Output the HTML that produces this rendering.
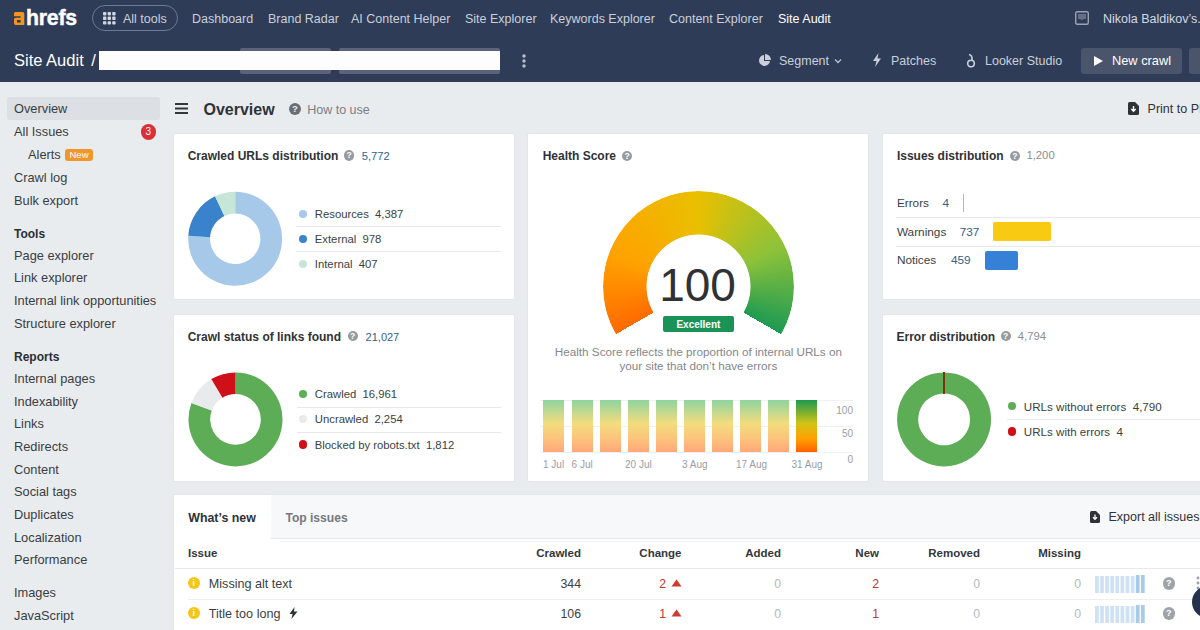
<!DOCTYPE html>
<html><head><meta charset="utf-8">
<style>
*{box-sizing:border-box;margin:0;padding:0}
html,body{width:1200px;height:630px;overflow:hidden}
body{position:relative;background:#e9ecef;font-family:"Liberation Sans",sans-serif}
.a{position:absolute;white-space:nowrap}
</style></head><body>
<div class="a" style="left:0px;top:0px;width:1200px;height:82px;background:#2f3c57;"></div>
<svg class="a" style="left:14px;top:12px;" width="11" height="13" viewBox="0 0 11 13"><path d="M1.5 0H8.5Q10.3 0 10.3 1.8V13H1.8Q0 13 0 11.2V7.5Q0 5.8 1.8 5.8H6.6V4.2H0V1.5Q0 0 1.5 0z" fill="#f39422"/><rect x="3" y="8" width="3.6" height="2.6" fill="#2f3c57"/></svg>
<div class="a" style="left:26.0px;top:7.7px;font-size:21.3px;line-height:21.3px;font-weight:700;color:#fff;letter-spacing:-0.25px;-webkit-text-stroke:0.45px #fff">hrefs</div>
<div class="a" style="left:92px;top:5px;width:86px;height:26px;border:1px solid #6d7891;border-radius:13px"></div>
<svg class="a" style="left:103px;top:12px;" width="13" height="13" viewBox="0 0 13 13"><rect x="0" y="0" width="3.4" height="3.4" rx="0.8" fill="#d0d6e1"/><rect x="0" y="4.6" width="3.4" height="3.4" rx="0.8" fill="#d0d6e1"/><rect x="0" y="9.2" width="3.4" height="3.4" rx="0.8" fill="#d0d6e1"/><rect x="4.6" y="0" width="3.4" height="3.4" rx="0.8" fill="#d0d6e1"/><rect x="4.6" y="4.6" width="3.4" height="3.4" rx="0.8" fill="#d0d6e1"/><rect x="4.6" y="9.2" width="3.4" height="3.4" rx="0.8" fill="#d0d6e1"/><rect x="9.2" y="0" width="3.4" height="3.4" rx="0.8" fill="#d0d6e1"/><rect x="9.2" y="4.6" width="3.4" height="3.4" rx="0.8" fill="#d0d6e1"/><rect x="9.2" y="9.2" width="3.4" height="3.4" rx="0.8" fill="#d0d6e1"/></svg>
<div class="a" style="left:123.0px;top:12.8px;font-size:12.5px;line-height:12.5px;font-weight:400;color:#c9d0dc;">All tools</div>
<div class="a" style="left:192.0px;top:12.8px;font-size:12.5px;line-height:12.5px;font-weight:400;color:#c9d0dc;">Dashboard</div>
<div class="a" style="left:268.0px;top:12.8px;font-size:12.5px;line-height:12.5px;font-weight:400;color:#c9d0dc;">Brand Radar</div>
<div class="a" style="left:351.0px;top:12.8px;font-size:12.5px;line-height:12.5px;font-weight:400;color:#c9d0dc;">AI Content Helper</div>
<div class="a" style="left:465.0px;top:12.8px;font-size:12.5px;line-height:12.5px;font-weight:400;color:#c9d0dc;">Site Explorer</div>
<div class="a" style="left:550.0px;top:12.8px;font-size:12.5px;line-height:12.5px;font-weight:400;color:#c9d0dc;">Keywords Explorer</div>
<div class="a" style="left:669.0px;top:12.8px;font-size:12.5px;line-height:12.5px;font-weight:400;color:#c9d0dc;">Content Explorer</div>
<div class="a" style="left:778.0px;top:12.8px;font-size:12.5px;line-height:12.5px;font-weight:400;color:#fff;">Site Audit</div>
<svg class="a" style="left:1075px;top:11px;" width="14" height="14" viewBox="0 0 14 14"><rect x="0.7" y="0.7" width="12.6" height="12.6" rx="1.5" fill="none" stroke="#9aa3b5" stroke-width="1.4"/><path d="M3 3h8v5H8.5L7 9.5 5.5 8H3z" fill="#9aa3b5" opacity=".5"/></svg>
<div class="a" style="left:1103.0px;top:12.8px;font-size:12.5px;line-height:12.5px;font-weight:400;color:#d3d9e3;">Nikola Baldikov’s...</div>
<div class="a" style="left:14.0px;top:52.1px;font-size:16.5px;line-height:16.5px;font-weight:400;color:#fff;">Site Audit</div>
<div class="a" style="left:91.3px;top:52.1px;font-size:16.5px;line-height:16.5px;font-weight:400;color:#fff;">/</div>
<div class="a" style="left:240px;top:47.8px;width:91px;height:25.8px;background:#5a6379;border-radius:2px"></div>
<div class="a" style="left:339px;top:47.8px;width:161px;height:25.8px;background:#5a6379;border-radius:2px"></div>
<div class="a" style="left:99px;top:51.2px;width:401px;height:19.2px;background:#fdfdfd;"></div>
<svg class="a" style="left:521px;top:54px;" width="6" height="14" viewBox="0 0 6 14"><circle cx="3" cy="2" r="1.7" fill="#b8c0cf"/><circle cx="3" cy="7" r="1.7" fill="#b8c0cf"/><circle cx="3" cy="12" r="1.7" fill="#b8c0cf"/></svg>
<svg class="a" style="left:758px;top:54px;" width="13" height="13" viewBox="0 0 13 13"><path d="M6 1A5.5 5.5 0 1 0 12 7H6z" fill="#c9d0dc"/><path d="M7 0v6h6A6 6 0 0 0 7 0z" fill="#c9d0dc"/></svg>
<div class="a" style="left:779.0px;top:55.2px;font-size:12.5px;line-height:12.5px;font-weight:400;color:#c9d0dc;">Segment</div>
<svg class="a" style="left:834px;top:58px;" width="8" height="6" viewBox="0 0 8 6"><path d="M1 1.5l3 3 3-3" fill="none" stroke="#b9c1cf" stroke-width="1.3"/></svg>
<svg class="a" style="left:872px;top:53px;" width="10" height="14" viewBox="0 0 10 14"><path d="M6.5 0L1 8h3.5L3 14l6-8.5H5.5z" fill="#c9d0dc"/></svg>
<div class="a" style="left:891.0px;top:55.2px;font-size:12.5px;line-height:12.5px;font-weight:400;color:#c9d0dc;">Patches</div>
<svg class="a" style="left:966px;top:53px;" width="10" height="15" viewBox="0 0 10 15"><circle cx="5" cy="10.5" r="3.3" fill="none" stroke="#c9d0dc" stroke-width="1.6"/><path d="M3 1.5Q6.5 2 6 7.2" fill="none" stroke="#c9d0dc" stroke-width="1.6"/></svg>
<div class="a" style="left:985.0px;top:55.2px;font-size:12.5px;line-height:12.5px;font-weight:400;color:#c9d0dc;">Looker Studio</div>
<div class="a" style="left:1081px;top:48px;width:101px;height:26px;background:#4a556c;border-radius:3px"></div>
<svg class="a" style="left:1093.5px;top:56px;" width="9" height="10" viewBox="0 0 9 10"><path d="M0 0l9 5-9 5z" fill="#fff"/></svg>
<div class="a" style="left:1112.0px;top:55.0px;font-size:12.8px;line-height:12.8px;font-weight:400;color:#fff;">New crawl</div>
<div class="a" style="left:1189px;top:48px;width:20px;height:26px;background:#4a556c;border-radius:3px"></div>
<div class="a" style="left:7px;top:97px;width:153px;height:23px;background:#dcdfe3;border-radius:3px"></div>
<div class="a" style="left:14.0px;top:102.8px;font-size:12.8px;line-height:12.8px;font-weight:400;color:#393d43;">Overview</div>
<div class="a" style="left:14.0px;top:125.9px;font-size:12.8px;line-height:12.8px;font-weight:400;color:#393d43;">All Issues</div>
<div class="a" style="left:28.0px;top:149.2px;font-size:12.8px;line-height:12.8px;font-weight:400;color:#393d43;">Alerts</div>
<div class="a" style="left:14.0px;top:172.3px;font-size:12.8px;line-height:12.8px;font-weight:400;color:#393d43;">Crawl log</div>
<div class="a" style="left:14.0px;top:194.5px;font-size:12.8px;line-height:12.8px;font-weight:400;color:#393d43;">Bulk export</div>
<div class="a" style="left:14.0px;top:227.6px;font-size:12px;line-height:12px;font-weight:700;color:#2b2f35;">Tools</div>
<div class="a" style="left:14.0px;top:250.0px;font-size:12.8px;line-height:12.8px;font-weight:400;color:#393d43;">Page explorer</div>
<div class="a" style="left:14.0px;top:272.3px;font-size:12.8px;line-height:12.8px;font-weight:400;color:#393d43;">Link explorer</div>
<div class="a" style="left:14.0px;top:295.0px;font-size:12.8px;line-height:12.8px;font-weight:400;color:#393d43;">Internal link opportunities</div>
<div class="a" style="left:14.0px;top:317.6px;font-size:12.8px;line-height:12.8px;font-weight:400;color:#393d43;">Structure explorer</div>
<div class="a" style="left:14.0px;top:351.2px;font-size:12px;line-height:12px;font-weight:700;color:#2b2f35;">Reports</div>
<div class="a" style="left:14.0px;top:373.4px;font-size:12.8px;line-height:12.8px;font-weight:400;color:#393d43;">Internal pages</div>
<div class="a" style="left:14.0px;top:396.0px;font-size:12.8px;line-height:12.8px;font-weight:400;color:#393d43;">Indexability</div>
<div class="a" style="left:14.0px;top:418.4px;font-size:12.8px;line-height:12.8px;font-weight:400;color:#393d43;">Links</div>
<div class="a" style="left:14.0px;top:440.8px;font-size:12.8px;line-height:12.8px;font-weight:400;color:#393d43;">Redirects</div>
<div class="a" style="left:14.0px;top:463.5px;font-size:12.8px;line-height:12.8px;font-weight:400;color:#393d43;">Content</div>
<div class="a" style="left:14.0px;top:485.8px;font-size:12.8px;line-height:12.8px;font-weight:400;color:#393d43;">Social tags</div>
<div class="a" style="left:14.0px;top:509.0px;font-size:12.8px;line-height:12.8px;font-weight:400;color:#393d43;">Duplicates</div>
<div class="a" style="left:14.0px;top:531.9px;font-size:12.8px;line-height:12.8px;font-weight:400;color:#393d43;">Localization</div>
<div class="a" style="left:14.0px;top:554.0px;font-size:12.8px;line-height:12.8px;font-weight:400;color:#393d43;">Performance</div>
<div class="a" style="left:14.0px;top:587.0px;font-size:12.8px;line-height:12.8px;font-weight:400;color:#393d43;">Images</div>
<div class="a" style="left:14.0px;top:609.6px;font-size:12.8px;line-height:12.8px;font-weight:400;color:#393d43;">JavaScript</div>
<div class="a" style="left:140.5px;top:124px;width:15.5px;height:15.5px;border-radius:50%;background:#d9303a;color:#fff;font-size:10px;line-height:15.5px;text-align:center">3</div>
<div class="a" style="left:65px;top:148.5px;width:28px;height:12px;border-radius:3px;background:#f0962a;color:#fff;font-size:9.5px;line-height:12px;text-align:center">New</div>
<svg class="a" style="left:175px;top:103px;" width="13" height="11" viewBox="0 0 13 11"><rect x="0" y="0" width="13" height="2" fill="#33373d"/><rect x="0" y="4.5" width="13" height="2" fill="#33373d"/><rect x="0" y="9" width="13" height="2" fill="#33373d"/></svg>
<div class="a" style="left:203.5px;top:102.1px;font-size:16px;line-height:16px;font-weight:700;color:#2f3338;">Overview</div>
<div class="a" style="left:289px;top:103px;width:12px;height:12px;border-radius:50%;background:#6b6f75;color:#e9ecef;font-size:9.5px;line-height:12px;text-align:center;font-weight:bold">?</div>
<div class="a" style="left:307.2px;top:103.7px;font-size:12.5px;line-height:12.5px;font-weight:400;color:#7a7e85;">How to use</div>
<svg class="a" style="left:1128px;top:102px;" width="11" height="13" viewBox="0 0 11 13"><path d="M0 1.5Q0 0 1.5 0H7l4 4v7.5Q11 13 9.5 13h-8Q0 13 0 11.5z" fill="#2f3338"/><path d="M5.5 4v5M3.3 7l2.2 2.2L7.7 7" stroke="#fff" stroke-width="1.4" fill="none"/></svg>
<div class="a" style="left:1147.6px;top:102.6px;font-size:12.5px;line-height:12.5px;font-weight:400;color:#2f3338;">Print to PDF</div>
<div class="a" style="left:173px;top:133px;width:341.5px;height:167px;background:#fff;border:1px solid #e3e6e9;border-radius:2px"></div>
<div class="a" style="left:173px;top:314px;width:341.5px;height:167.5px;background:#fff;border:1px solid #e3e6e9;border-radius:2px"></div>
<div class="a" style="left:527.3px;top:133px;width:341.5px;height:348.5px;background:#fff;border:1px solid #e3e6e9;border-radius:2px"></div>
<div class="a" style="left:881.8px;top:133px;width:330px;height:166.5px;background:#fff;border:1px solid #e3e6e9;border-radius:2px"></div>
<div class="a" style="left:881.8px;top:314px;width:330px;height:167.5px;background:#fff;border:1px solid #e3e6e9;border-radius:2px"></div>
<div class="a" style="left:173px;top:494px;width:1040px;height:150px;background:#fff;border:1px solid #e3e6e9;border-radius:2px"></div>
<div class="a" style="left:187.7px;top:149.9px;font-size:12px;line-height:12px;font-weight:700;color:#2f3237;">Crawled URLs distribution</div>
<div class="a" style="left:343.9px;top:150.4px;width:10.2px;height:10.2px;border-radius:50%;background:#979a9e;color:#fff;font-size:8.5px;line-height:10.2px;text-align:center;font-weight:bold">?</div>
<div class="a" style="left:361.7px;top:150.6px;font-size:11.2px;line-height:11.2px;font-weight:400;color:#36608c;">5,772</div>
<svg class="a" style="left:180px;top:183px;" width="112" height="112" viewBox="0 0 112 112"><path d="M55.20 8.80A47 47 0 1 1 8.29 52.83L30.05 54.21A25.2 25.2 0 1 0 55.20 30.60Z" fill="#a6c9ea"/><path d="M8.29 52.83A47 47 0 0 1 35.05 13.34L44.40 33.03A25.2 25.2 0 0 0 30.05 54.21Z" fill="#3a82cc"/><path d="M35.05 13.34A47 47 0 0 1 55.20 8.80L55.20 30.60A25.2 25.2 0 0 0 44.40 33.03Z" fill="#c6e6d8"/></svg>
<div class="a" style="left:298.7px;top:209.5px;width:8.6px;height:8.6px;border-radius:50%;background:#a6c9ea"></div>
<div class="a" style="left:314.8px;top:209.0px;font-size:11.3px;line-height:11.3px;font-weight:400;color:#3a3f45;">Resources&nbsp; 4,387</div>
<div class="a" style="left:298.7px;top:234.6px;width:8.6px;height:8.6px;border-radius:50%;background:#3a82cc"></div>
<div class="a" style="left:314.8px;top:234.1px;font-size:11.3px;line-height:11.3px;font-weight:400;color:#3a3f45;">External&nbsp; 978</div>
<div class="a" style="left:298.7px;top:259.7px;width:8.6px;height:8.6px;border-radius:50%;background:#c6e6d8"></div>
<div class="a" style="left:314.8px;top:259.2px;font-size:11.3px;line-height:11.3px;font-weight:400;color:#3a3f45;">Internal&nbsp; 407</div>
<div class="a" style="left:296px;top:226.3px;width:205px;height:1px;background:#e6e8ea;"></div>
<div class="a" style="left:296px;top:251.4px;width:205px;height:1px;background:#e6e8ea;"></div>
<div class="a" style="left:187.7px;top:330.8px;font-size:12px;line-height:12px;font-weight:700;color:#2f3237;">Crawl status of links found</div>
<div class="a" style="left:347.5px;top:331.3px;width:10.2px;height:10.2px;border-radius:50%;background:#979a9e;color:#fff;font-size:8.5px;line-height:10.2px;text-align:center;font-weight:bold">?</div>
<div class="a" style="left:365.6px;top:331.7px;font-size:11px;line-height:11px;font-weight:400;color:#36608c;">21,027</div>
<svg class="a" style="left:180px;top:364px;" width="112" height="112" viewBox="0 0 112 112"><path d="M55.50 8.40A47 47 0 1 1 11.44 39.03L31.78 46.59A25.3 25.3 0 1 0 55.50 30.10Z" fill="#5cad55"/><path d="M11.44 39.03A47 47 0 0 1 31.28 15.12L42.46 33.72A25.3 25.3 0 0 0 31.78 46.59Z" fill="#e9eaeb"/><path d="M31.28 15.12A47 47 0 0 1 55.50 8.40L55.50 30.10A25.3 25.3 0 0 0 42.46 33.72Z" fill="#cf1018"/></svg>
<div class="a" style="left:298.9px;top:389.9px;width:8.6px;height:8.6px;border-radius:50%;background:#5cad55"></div>
<div class="a" style="left:314.8px;top:389.4px;font-size:11.3px;line-height:11.3px;font-weight:400;color:#3a3f45;">Crawled&nbsp; 16,961</div>
<div class="a" style="left:298.9px;top:414.7px;width:8.6px;height:8.6px;border-radius:50%;background:#e9eaeb"></div>
<div class="a" style="left:314.8px;top:414.2px;font-size:11.3px;line-height:11.3px;font-weight:400;color:#3a3f45;">Uncrawled&nbsp; 2,254</div>
<div class="a" style="left:298.9px;top:440.1px;width:8.6px;height:8.6px;border-radius:50%;background:#cf1018"></div>
<div class="a" style="left:314.8px;top:439.6px;font-size:11.3px;line-height:11.3px;font-weight:400;color:#3a3f45;">Blocked by robots.txt&nbsp; 1,812</div>
<div class="a" style="left:297px;top:407px;width:204px;height:1px;background:#e6e8ea;"></div>
<div class="a" style="left:297px;top:432px;width:204px;height:1px;background:#e6e8ea;"></div>
<div class="a" style="left:542.7px;top:149.8px;font-size:12px;line-height:12px;font-weight:700;color:#2f3237;">Health Score</div>
<div class="a" style="left:622px;top:150.6px;width:10.2px;height:10.2px;border-radius:50%;background:#979a9e;color:#fff;font-size:8.5px;line-height:10.2px;text-align:center;font-weight:bold">?</div>
<div class="a" id="gauge" style="left:602.8px;top:190.6px;width:191.2px;height:191.2px;border-radius:50%;background:conic-gradient(from -120deg, #ff6a00 0deg, #ffa200 50deg, #e9c000 120deg, #8cc23a 185deg, #1e9a52 240deg, transparent 240deg);-webkit-mask:radial-gradient(circle, transparent 51.6px, #000 52.4px);mask:radial-gradient(circle, transparent 51.6px, #000 52.4px)"></div>
<div class="a" style="left:397.5px;width:600px;text-align:center;top:261.5px;font-size:46px;line-height:46px;font-weight:400;color:#2f3135;">100</div>
<div class="a" style="left:663.2px;top:316.3px;width:70.5px;height:15.4px;background:#1b9357;border-radius:2px"></div>
<div class="a" style="left:398.4px;width:600px;text-align:center;top:319.9px;font-size:10px;line-height:10px;font-weight:700;color:#fff;">Excellent</div>
<div class="a" style="left:398.4px;width:600px;text-align:center;top:346.3px;font-size:11.7px;line-height:11.7px;font-weight:400;color:#84878c;">Health Score reflects the proportion of internal URLs on</div>
<div class="a" style="left:398.4px;width:600px;text-align:center;top:359.9px;font-size:11.7px;line-height:11.7px;font-weight:400;color:#84878c;">your site that don’t have errors</div>
<div class="a" style="left:540px;top:399.5px;width:313px;height:1px;background:#eef0f1;"></div>
<div class="a" style="left:540px;top:425.5px;width:313px;height:1px;background:#eef0f1;"></div>
<div class="a" style="left:540px;top:452px;width:313px;height:1px;background:#eef0f1;"></div>
<div class="a" style="left:543.4px;top:399.5px;width:21px;height:52.5px;background:linear-gradient(#8ed39f 0%, #f3dc7e 45%, #fcc37c 75%, #ffa77a 100%);"></div>
<div class="a" style="left:571.5px;top:399.5px;width:21px;height:52.5px;background:linear-gradient(#8ed39f 0%, #f3dc7e 45%, #fcc37c 75%, #ffa77a 100%);"></div>
<div class="a" style="left:599.6px;top:399.5px;width:21px;height:52.5px;background:linear-gradient(#8ed39f 0%, #f3dc7e 45%, #fcc37c 75%, #ffa77a 100%);"></div>
<div class="a" style="left:627.6px;top:399.5px;width:21px;height:52.5px;background:linear-gradient(#8ed39f 0%, #f3dc7e 45%, #fcc37c 75%, #ffa77a 100%);"></div>
<div class="a" style="left:655.7px;top:399.5px;width:21px;height:52.5px;background:linear-gradient(#8ed39f 0%, #f3dc7e 45%, #fcc37c 75%, #ffa77a 100%);"></div>
<div class="a" style="left:683.8px;top:399.5px;width:21px;height:52.5px;background:linear-gradient(#8ed39f 0%, #f3dc7e 45%, #fcc37c 75%, #ffa77a 100%);"></div>
<div class="a" style="left:711.9px;top:399.5px;width:21px;height:52.5px;background:linear-gradient(#8ed39f 0%, #f3dc7e 45%, #fcc37c 75%, #ffa77a 100%);"></div>
<div class="a" style="left:740.0px;top:399.5px;width:21px;height:52.5px;background:linear-gradient(#8ed39f 0%, #f3dc7e 45%, #fcc37c 75%, #ffa77a 100%);"></div>
<div class="a" style="left:768.0px;top:399.5px;width:21px;height:52.5px;background:linear-gradient(#8ed39f 0%, #f3dc7e 45%, #fcc37c 75%, #ffa77a 100%);"></div>
<div class="a" style="left:796.1px;top:399.5px;width:21px;height:52.5px;background:linear-gradient(#1c9a50 0%, #d3c317 45%, #ffa000 75%, #ff6000 100%);"></div>
<div class="a" style="right:347.0px;top:405.8px;font-size:10px;line-height:10px;font-weight:400;color:#9a9ea4;">100</div>
<div class="a" style="right:347.0px;top:429.3px;font-size:10px;line-height:10px;font-weight:400;color:#9a9ea4;">50</div>
<div class="a" style="right:347.0px;top:455.3px;font-size:10px;line-height:10px;font-weight:400;color:#9a9ea4;">0</div>
<div class="a" style="left:543.0px;top:459.8px;font-size:10px;line-height:10px;font-weight:400;color:#9a9ea4;">1 Jul</div>
<div class="a" style="left:571.6px;top:459.8px;font-size:10px;line-height:10px;font-weight:400;color:#9a9ea4;">6 Jul</div>
<div class="a" style="left:625.0px;top:459.8px;font-size:10px;line-height:10px;font-weight:400;color:#9a9ea4;">20 Jul</div>
<div class="a" style="left:682.0px;top:459.8px;font-size:10px;line-height:10px;font-weight:400;color:#9a9ea4;">3 Aug</div>
<div class="a" style="left:736.0px;top:459.8px;font-size:10px;line-height:10px;font-weight:400;color:#9a9ea4;">17 Aug</div>
<div class="a" style="left:791.5px;top:459.8px;font-size:10px;line-height:10px;font-weight:400;color:#9a9ea4;">31 Aug</div>
<div class="a" style="left:896.9px;top:149.8px;font-size:12px;line-height:12px;font-weight:700;color:#2f3237;">Issues distribution</div>
<div class="a" style="left:1009.7px;top:150.6px;width:10.2px;height:10.2px;border-radius:50%;background:#979a9e;color:#fff;font-size:8.5px;line-height:10.2px;text-align:center;font-weight:bold">?</div>
<div class="a" style="left:1026.4px;top:150.4px;font-size:11.3px;line-height:11.3px;font-weight:400;color:#8a8e94;">1,200</div>
<div class="a" style="left:896.9px;top:198.0px;font-size:11.8px;line-height:11.8px;font-weight:400;color:#3a3f45;">Errors</div>
<div class="a" style="left:942.6px;top:198.0px;font-size:11.8px;line-height:11.8px;font-weight:400;color:#36608c;">4</div>
<div class="a" style="left:962.5px;top:194px;width:1.3px;height:18.4px;background:#b4b7bb;"></div>
<div class="a" style="left:896px;top:217.4px;width:320px;height:1px;background:#e6e8ea;"></div>
<div class="a" style="left:896.9px;top:226.6px;font-size:11.8px;line-height:11.8px;font-weight:400;color:#3a3f45;">Warnings</div>
<div class="a" style="left:959.7px;top:226.6px;font-size:11.8px;line-height:11.8px;font-weight:400;color:#36608c;">737</div>
<div class="a" style="left:993px;top:222.2px;width:57.5px;height:19.2px;background:#f8cb12;border-radius:2px"></div>
<div class="a" style="left:896px;top:246.1px;width:320px;height:1px;background:#e6e8ea;"></div>
<div class="a" style="left:896.9px;top:255.1px;font-size:11.8px;line-height:11.8px;font-weight:400;color:#3a3f45;">Notices</div>
<div class="a" style="left:951.0px;top:255.1px;font-size:11.8px;line-height:11.8px;font-weight:400;color:#36608c;">459</div>
<div class="a" style="left:985.2px;top:251.2px;width:32.5px;height:18.8px;background:#3581d8;border-radius:2px"></div>
<div class="a" style="left:896.5px;top:330.8px;font-size:12px;line-height:12px;font-weight:700;color:#2f3237;">Error distribution</div>
<div class="a" style="left:1000.5px;top:331.3px;width:10.2px;height:10.2px;border-radius:50%;background:#979a9e;color:#fff;font-size:8.5px;line-height:10.2px;text-align:center;font-weight:bold">?</div>
<div class="a" style="left:1017.8px;top:331.4px;font-size:11.3px;line-height:11.3px;font-weight:400;color:#8a8e94;">4,794</div>
<svg class="a" style="left:888px;top:364px;" width="112" height="112" viewBox="0 0 112 112"><path d="M56.20 8.40A47 47 0 1 1 55.95 8.40L56.06 29.50A25.9 25.9 0 1 0 56.20 29.50Z" fill="#5cad55"/><path d="M55.95 8.40A47 47 0 0 1 56.20 8.40L56.20 29.50A25.9 25.9 0 0 0 56.06 29.50Z" fill="#8b1a10"/></svg>
<div class="a" style="left:943.4px;top:372.4px;width:1.6px;height:21.5px;background:#7a3412;"></div>
<div class="a" style="left:1007.5px;top:401.9px;width:8.6px;height:8.6px;border-radius:50%;background:#5cad55"></div>
<div class="a" style="left:1023.8px;top:401.2px;font-size:11.6px;line-height:11.6px;font-weight:400;color:#3a3f45;">URLs without errors&nbsp; 4,790</div>
<div class="a" style="left:1007.5px;top:427.0px;width:8.6px;height:8.6px;border-radius:50%;background:#cf1018"></div>
<div class="a" style="left:1023.8px;top:426.3px;font-size:11.6px;line-height:11.6px;font-weight:400;color:#3a3f45;">URLs with errors&nbsp; 4</div>
<div class="a" style="left:1007.3px;top:419.2px;width:200px;height:1px;background:#e6e8ea;"></div>
<div class="a" style="left:174.5px;top:495.2px;width:1030px;height:43px;background:#f7f8f9;"></div>
<div class="a" style="left:174.5px;top:495.2px;width:96px;height:44px;background:#fff;"></div>
<div class="a" style="left:270px;top:538px;width:940px;height:1px;background:#e6e8ea;"></div>
<div class="a" style="left:280px;top:541px;width:930px;height:1px;background:#f1f2f4;"></div>
<div class="a" style="left:188.2px;top:512.0px;font-size:12.4px;line-height:12.4px;font-weight:700;color:#2f3237;">What’s new</div>
<div class="a" style="left:285.4px;top:512.3px;font-size:12.1px;line-height:12.1px;font-weight:700;color:#75797e;">Top issues</div>
<svg class="a" style="left:1090px;top:511px;" width="10" height="12" viewBox="0 0 10 12"><path d="M0 1.5Q0 0 1.5 0H6l4 4v6.5Q10 12 8.5 12h-7Q0 12 0 10.5z" fill="#2f3338"/><path d="M5 3.5v4.5M3 6.3l2 2 2-2" stroke="#fff" stroke-width="1.3" fill="none"/></svg>
<div class="a" style="left:1108.5px;top:511.2px;font-size:12.5px;line-height:12.5px;font-weight:400;color:#2f3338;">Export all issues</div>
<div class="a" style="left:188.0px;top:547.6px;font-size:11.5px;line-height:11.5px;font-weight:700;color:#33373c;">Issue</div>
<div class="a" style="right:619.0px;top:547.6px;font-size:11.5px;line-height:11.5px;font-weight:700;color:#33373c;">Crawled</div>
<div class="a" style="right:518.5px;top:547.6px;font-size:11.5px;line-height:11.5px;font-weight:700;color:#33373c;">Change</div>
<div class="a" style="right:419.0px;top:547.6px;font-size:11.5px;line-height:11.5px;font-weight:700;color:#33373c;">Added</div>
<div class="a" style="right:321.0px;top:547.6px;font-size:11.5px;line-height:11.5px;font-weight:700;color:#33373c;">New</div>
<div class="a" style="right:220.0px;top:547.6px;font-size:11.5px;line-height:11.5px;font-weight:700;color:#33373c;">Removed</div>
<div class="a" style="right:119.0px;top:547.6px;font-size:11.5px;line-height:11.5px;font-weight:700;color:#33373c;">Missing</div>
<div class="a" style="left:174.5px;top:568.3px;width:1030px;height:1px;background:#e6e8ea;"></div>
<div class="a" style="left:188px;top:598.8px;width:1020px;height:1px;background:#eceef0;"></div>
<div class="a" style="left:187.7px;top:577.3px;width:12px;height:12px;border-radius:50%;background:#f5c518;color:#fff;font-size:9px;line-height:12px;text-align:center;font-weight:bold">i</div>
<div class="a" style="left:208.8px;top:577.8px;font-size:12.6px;line-height:12.6px;font-weight:400;color:#3a3f45;">Missing alt text</div>
<div class="a" style="right:619.0px;top:578.1px;font-size:12.3px;line-height:12.3px;font-weight:400;color:#3a3f45;">344</div>
<div class="a" style="right:534.0px;top:578.1px;font-size:12.3px;line-height:12.3px;font-weight:400;color:#c0392b;">2</div>
<svg class="a" style="left:670.5px;top:578.7px;" width="11" height="8" viewBox="0 0 11 8"><path d="M5.5 0.5L10.5 7.5H0.5z" fill="#d23a30"/></svg>
<div class="a" style="right:419.0px;top:578.1px;font-size:12.3px;line-height:12.3px;font-weight:400;color:#b5b8bc;">0</div>
<div class="a" style="right:321.0px;top:578.1px;font-size:12.3px;line-height:12.3px;font-weight:400;color:#c0392b;">2</div>
<div class="a" style="right:220.0px;top:578.1px;font-size:12.3px;line-height:12.3px;font-weight:400;color:#b5b8bc;">0</div>
<div class="a" style="right:119.0px;top:578.1px;font-size:12.3px;line-height:12.3px;font-weight:400;color:#b5b8bc;">0</div>
<svg class="a" style="left:1095px;top:575px;" width="51" height="18" viewBox="0 0 51 18"><rect x="0.0" y="1" width="3.8" height="17" fill="#cfe2f3"/><rect x="5.1" y="1" width="3.8" height="17" fill="#cfe2f3"/><rect x="10.2" y="1" width="3.8" height="17" fill="#cfe2f3"/><rect x="15.3" y="1" width="3.8" height="17" fill="#cfe2f3"/><rect x="20.4" y="1" width="3.8" height="17" fill="#cfe2f3"/><rect x="25.5" y="1" width="3.8" height="17" fill="#cfe2f3"/><rect x="30.6" y="1" width="3.8" height="17" fill="#cfe2f3"/><rect x="35.7" y="1" width="3.8" height="17" fill="#cfe2f3"/><rect x="40.8" y="0" width="3.8" height="18" fill="#a9cbe9"/><rect x="45.9" y="0" width="3.8" height="18" fill="#a9cbe9"/></svg>
<div class="a" style="left:1162.5px;top:577.3px;width:12.4px;height:12.4px;border-radius:50%;background:#a0a3a8;color:#fff;font-size:9px;line-height:12px;text-align:center;font-weight:bold">?</div>
<div class="a" style="left:187.7px;top:607.3px;width:12px;height:12px;border-radius:50%;background:#f5c518;color:#fff;font-size:9px;line-height:12px;text-align:center;font-weight:bold">i</div>
<div class="a" style="left:208.8px;top:607.8px;font-size:12.6px;line-height:12.6px;font-weight:400;color:#3a3f45;">Title too long</div>
<svg class="a" style="left:289px;top:606.7px;" width="9" height="12" viewBox="0 0 9 12"><path d="M5.5 0L0.5 7h3L2.5 12l6-7.5H5z" fill="#2f3338"/></svg>
<div class="a" style="right:619.0px;top:608.1px;font-size:12.3px;line-height:12.3px;font-weight:400;color:#3a3f45;">106</div>
<div class="a" style="right:534.0px;top:608.1px;font-size:12.3px;line-height:12.3px;font-weight:400;color:#c0392b;">1</div>
<svg class="a" style="left:670.5px;top:608.7px;" width="11" height="8" viewBox="0 0 11 8"><path d="M5.5 0.5L10.5 7.5H0.5z" fill="#d23a30"/></svg>
<div class="a" style="right:419.0px;top:608.1px;font-size:12.3px;line-height:12.3px;font-weight:400;color:#b5b8bc;">0</div>
<div class="a" style="right:321.0px;top:608.1px;font-size:12.3px;line-height:12.3px;font-weight:400;color:#c0392b;">1</div>
<div class="a" style="right:220.0px;top:608.1px;font-size:12.3px;line-height:12.3px;font-weight:400;color:#b5b8bc;">0</div>
<div class="a" style="right:119.0px;top:608.1px;font-size:12.3px;line-height:12.3px;font-weight:400;color:#b5b8bc;">0</div>
<svg class="a" style="left:1095px;top:605px;" width="51" height="18" viewBox="0 0 51 18"><rect x="0.0" y="1" width="3.8" height="17" fill="#cfe2f3"/><rect x="5.1" y="1" width="3.8" height="17" fill="#cfe2f3"/><rect x="10.2" y="1" width="3.8" height="17" fill="#cfe2f3"/><rect x="15.3" y="1" width="3.8" height="17" fill="#cfe2f3"/><rect x="20.4" y="1" width="3.8" height="17" fill="#cfe2f3"/><rect x="25.5" y="1" width="3.8" height="17" fill="#cfe2f3"/><rect x="30.6" y="1" width="3.8" height="17" fill="#cfe2f3"/><rect x="35.7" y="1" width="3.8" height="17" fill="#cfe2f3"/><rect x="40.8" y="0" width="3.8" height="18" fill="#a9cbe9"/><rect x="45.9" y="0" width="3.8" height="18" fill="#a9cbe9"/></svg>
<div class="a" style="left:1162.5px;top:607.3px;width:12.4px;height:12.4px;border-radius:50%;background:#a0a3a8;color:#fff;font-size:9px;line-height:12px;text-align:center;font-weight:bold">?</div>
<svg class="a" style="left:1196px;top:576px;" width="4" height="16" viewBox="0 0 4 16"><circle cx="2" cy="2" r="1.4" fill="#9a9ea4"/><circle cx="2" cy="7" r="1.4" fill="#9a9ea4"/><circle cx="2" cy="12" r="1.4" fill="#9a9ea4"/></svg>
<div class="a" style="left:1192px;top:586px;width:32px;height:32px;border-radius:50%;background:#25324d"></div>
</body></html>
